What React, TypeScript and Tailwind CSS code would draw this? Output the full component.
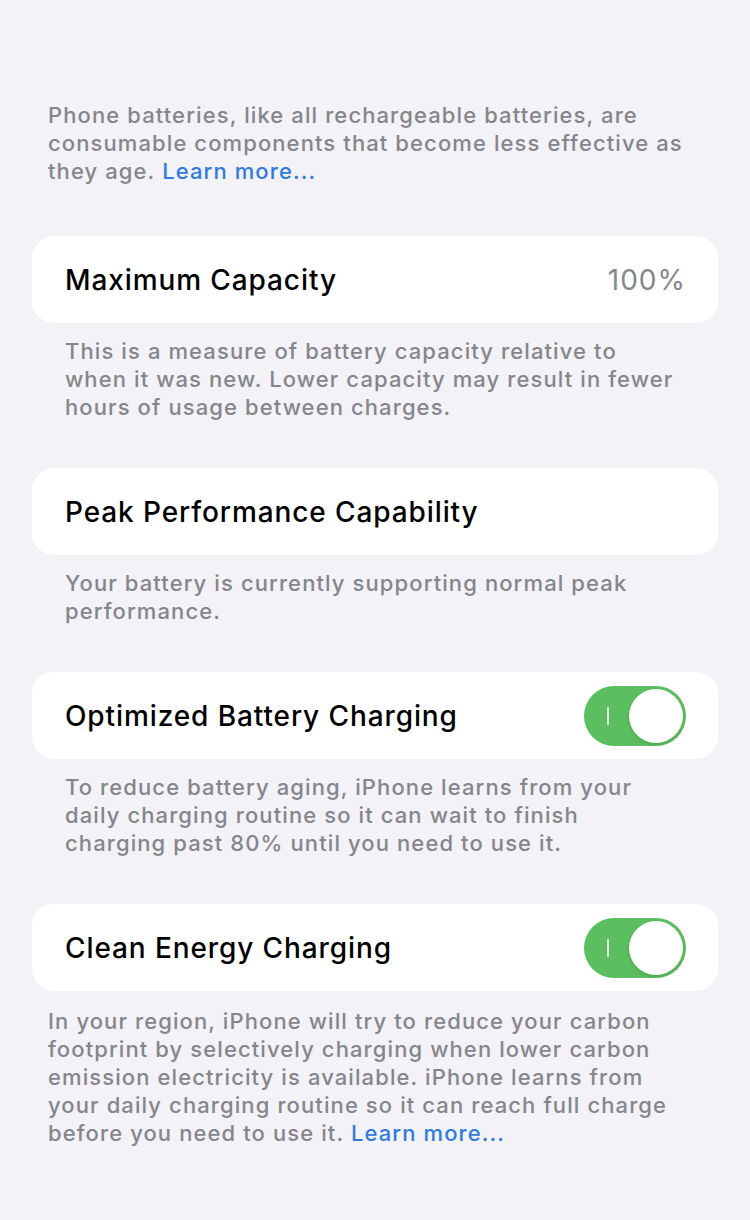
import React from "react"

const font = { fontFamily: "Inter, 'Noto Sans', sans-serif" }

function Toggle() {
  return (
    <div className="relative w-[102px] h-[60px] rounded-full bg-[#5bbf5f] shrink-0">
      <div className="absolute left-[23px] top-[21px] w-[2px] h-[18px] bg-white/90 rounded-full" />
      <div className="absolute right-[3px] top-[3px] w-[54px] h-[54px] rounded-full bg-white shadow-[0_2px_4px_rgba(0,0,0,0.12)]" />
    </div>
  )
}

function Card({ title, right }: { title: string; right?: React.ReactNode }) {
  return (
    <div className="mx-[32px] h-[87px] rounded-[22px] bg-white flex items-center justify-between pl-[33px] pr-[32px]">
      <span className="text-[28px] font-medium text-black tracking-[0.9px]">{title}</span>
      {right}
    </div>
  )
}

function Footer({ children, inset }: { children: React.ReactNode; inset?: boolean }) {
  return (
    <p
      className={`text-[22px] leading-[28px] text-[#85858a] font-medium tracking-[1.1px] ${
        inset ? "pl-[65px] pr-[67px]" : "pl-[48px] pr-[53px]"
      }`}
    >
      {children}
    </p>
  )
}

export default function App() {
  return (
    <div className="w-[750px] h-[1220px] bg-[#f2f2f7] pt-[101px]" style={font}>
      <Footer>
        Phone batteries, like all rechargeable batteries, are consumable components that
        become less effective as they age.{" "}
        <span className="text-[#2f7ae0]">Learn more...</span>
      </Footer>

      <div className="mt-[51px]">
        <Card
          title="Maximum Capacity"
          right={
            <span className="text-[28px] text-[#86868b] font-normal tracking-[1px]">100%</span>
          }
        />
      </div>
      <div className="mt-[14px]">
        <Footer inset>
          This is a measure of battery capacity relative to when it was new. Lower capacity
          may result in fewer hours of usage between charges.
        </Footer>
      </div>

      <div className="mt-[47px]">
        <Card title="Peak Performance Capability" />
      </div>
      <div className="mt-[14px]">
        <Footer inset>Your battery is currently supporting normal peak performance.</Footer>
      </div>

      <div className="mt-[47px]">
        <Card title="Optimized Battery Charging" right={<Toggle />} />
      </div>
      <div className="mt-[14px]">
        <Footer inset>
          To reduce battery aging, iPhone learns from your daily charging routine so it can
          wait to finish charging past 80% until you need to use it.
        </Footer>
      </div>

      <div className="mt-[47px]">
        <Card title="Clean Energy Charging" right={<Toggle />} />
      </div>
      <div className="mt-[16px]">
        <Footer>
          In your region, iPhone will try to reduce your carbon footprint by selectively
          charging when lower carbon emission electricity is available. iPhone learns from
          your daily charging routine so it can reach full charge before you need to use it.{" "}
          <span className="text-[#2f7ae0]">Learn more...</span>
        </Footer>
      </div>
    </div>
  )
}
